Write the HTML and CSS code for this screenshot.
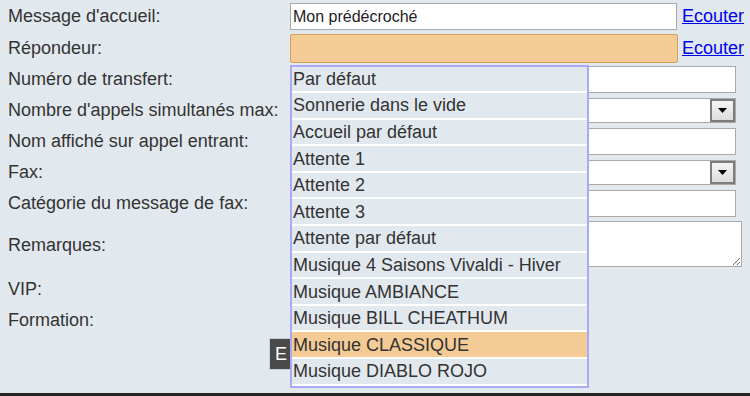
FILE: index.html
```html
<!DOCTYPE html>
<html lang="fr">
<head>
<meta charset="utf-8">
<title>Répondeur</title>
<link rel="stylesheet" href="styles.css">
</head>
<body>
<div class="page">
  <div class="row r1">
    <div class="label">Message d'accueil:</div>
    <div class="field">
      <input class="text w387" type="text" value="Mon prédécroché">
      <a class="link" href="#">Ecouter</a>
    </div>
  </div>
  <div class="row r2">
    <div class="label">Répondeur:</div>
    <div class="field anchor">
      <div class="select-open"></div>
      <a class="link" href="#">Ecouter</a>
      <ul class="dropdown">
        <li>Par défaut</li>
        <li>Sonnerie dans le vide</li>
        <li>Accueil par défaut</li>
        <li>Attente 1</li>
        <li>Attente 2</li>
        <li>Attente 3</li>
        <li>Attente par défaut</li>
        <li>Musique 4 Saisons Vivaldi - Hiver</li>
        <li>Musique AMBIANCE</li>
        <li>Musique BILL CHEATHUM</li>
        <li class="hl">Musique CLASSIQUE</li>
        <li>Musique DIABLO ROJO</li>
      </ul>
    </div>
  </div>
  <div class="row r3">
    <div class="label">Numéro de transfert:</div>
    <div class="field"><input class="text w446" type="text" value=""></div>
  </div>
  <div class="row r4">
    <div class="label">Nombre d'appels simultanés max:</div>
    <div class="field">
      <div class="select w446"><span class="arrow"><svg width="9" height="5" viewBox="0 0 9 5"><path d="M0 0H9L4.5 5Z" fill="#000"/></svg></span></div>
    </div>
  </div>
  <div class="row r5">
    <div class="label">Nom affiché sur appel entrant:</div>
    <div class="field"><input class="text w446" type="text" value=""></div>
  </div>
  <div class="row r6">
    <div class="label">Fax:</div>
    <div class="field">
      <div class="select w446"><span class="arrow"><svg width="9" height="5" viewBox="0 0 9 5"><path d="M0 0H9L4.5 5Z" fill="#000"/></svg></span></div>
    </div>
  </div>
  <div class="row r7">
    <div class="label">Catégorie du message de fax:</div>
    <div class="field"><input class="text w446" type="text" value=""></div>
  </div>
  <div class="row r8">
    <div class="label">Remarques:</div>
    <div class="field"><textarea class="area"></textarea></div>
  </div>
  <div class="row r9">
    <div class="label">VIP:</div>
  </div>
  <div class="row r10">
    <div class="label">Formation:</div>
  </div>
  <div class="row r11">
    <button class="btn" type="button">E</button>
  </div>
</div>
</body>
</html>
```
FILE: styles.css
```css
html, body {
  margin: 0;
  padding: 0;
}
body {
  background: #e2e9ee;
  font-family: "Liberation Sans", Arial, sans-serif;
  font-size: 18px;
  color: #333;
  overflow: hidden;
}
.page {
  height: 396px;
  box-sizing: border-box;
  border-bottom: 3px solid #262626;
  overflow: hidden;
}
.row {
  display: flex;
  align-items: center;
}
.label {
  flex: none;
  width: 282px;
  padding-left: 8px;
  white-space: nowrap;
}
.field {
  flex: none;
  display: flex;
  align-items: center;
}
.anchor {
  position: relative;
}
.r1 { height: 33px; }
.r2 { height: 30px; }
.r3 { height: 32px; }
.r4 { height: 30px; }
.r5 { height: 32px; }
.r6 { height: 30px; }
.r7 { height: 32px; }
.r8 { height: 49px; }
.r8 .label { padding-top: 4px; }
.r9 { height: 42px; }
.r10 { height: 20px; }
.r11 { padding-top: 8px; padding-left: 269px; }

.text {
  box-sizing: border-box;
  height: 27px;
  margin: 0;
  padding: 0 2px;
  border: 1px solid #a9a9a9;
  background: #fff;
  font-family: "Liberation Sans", Arial, sans-serif;
  font-size: 16px;
  color: #222;
  outline: none;
}
.w387 { width: 387px; }
.w446 { width: 446px; }
.link {
  margin-left: 5px;
  color: #0000ee;
  text-decoration: underline;
  font-size: 18px;
}
.r2 .link { margin-left: 4px; }
.select-open {
  box-sizing: border-box;
  width: 388px;
  height: 29px;
  border: 1px solid #d2a258;
  border-radius: 2px;
  background: #f4cb95;
}
.select {
  box-sizing: border-box;
  height: 25px;
  border: 1px solid #a9a9a9;
  background: #fff;
  display: flex;
  justify-content: flex-end;
}
.arrow {
  box-sizing: border-box;
  width: 25px;
  height: 23px;
  border: 2px solid #7d7d7d;
  background: linear-gradient(#f6f6f6, #dcdcdc);
  display: flex;
  align-items: center;
  justify-content: center;
}
.arrow svg { display: block; }
.area {
  box-sizing: border-box;
  width: 452px;
  height: 46px;
  margin: 0;
  border: 1px solid #a9a9a9;
  background: #fff;
  resize: both;
  outline: none;
}
.dropdown {
  position: absolute;
  top: 31px;
  left: 0;
  width: 299px;
  box-sizing: border-box;
  margin: 0;
  padding: 0;
  list-style: none;
  border: 2px solid #a9a9f7;
  background: #e2e9ee;
  z-index: 5;
}
.dropdown li {
  box-sizing: border-box;
  height: 26.6px;
  border-bottom: 2px solid #fff;
  padding: 1px 0 0 1px;
  display: flex;
  align-items: center;
  white-space: nowrap;
  font-size: 18px;
  color: #333;
}
.dropdown li.hl {
  background: #f4cb95;
}
.btn {
  box-sizing: border-box;
  height: 32px;
  width: 60px;
  margin: 0;
  padding: 0 0 0 5px;
  text-align: left;
  background: #4a4a4a;
  color: #fff;
  border: 1px solid #c9ced2;
  font-family: "Liberation Sans", Arial, sans-serif;
  font-size: 18px;
  white-space: nowrap;
}
```
